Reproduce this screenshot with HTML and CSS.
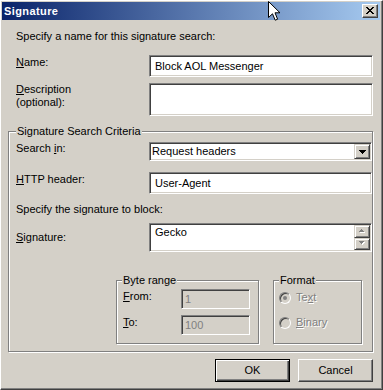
FILE: index.html
```html
<!DOCTYPE html>
<html lang="en">
<head>
  <meta charset="UTF-8">
  <meta name="viewport" content="width=device-width, initial-scale=1.0">
  <title>Signature</title>
  <link rel="stylesheet" href="styles.css">
</head>
<body>
  <div class="window">
    <div class="titlebar">
      <span class="title">Signature</span>
      <button class="close-btn" aria-label="Close">
        <svg width="8" height="7" viewBox="0 0 8 7" shape-rendering="crispEdges"><path fill="#000" d="M0 0h2v1H0zM6 0h2v1H6zM1 1h2v1H1zM5 1h2v1H5zM2 2h4v1H2zM3 3h2v1H3zM2 4h4v1H2zM1 5h2v1H1zM5 5h2v1H5zM0 6h2v1H0zM6 6h2v1H6z"/></svg>
      </button>
    </div>

    <div class="dialog">
      <p class="intro">Specify a name for this signature search:</p>

      <div class="row name-row">
        <label class="label"><u>N</u>ame:</label>
        <div class="edit">Block AOL Messenger</div>
      </div>
      <div class="row desc-row">
        <label class="label"><u>D</u>escription<br>(optional):</label>
        <div class="edit edit-tall"></div>
      </div>

      <div class="group criteria">
        <div class="group-title">Signature Search Criteria</div>

        <div class="row search-row">
          <label class="label">Search <u>i</u>n:</label>
          <div class="combo">
            <span class="combo-text">Request headers</span>
            <span class="raised combo-btn">
              <svg width="7" height="4" viewBox="0 0 7 4" shape-rendering="crispEdges"><path fill="#000" d="M0 0h7v1H0zM1 1h5v1H1zM2 2h3v1H2zM3 3h1v1H3z"/></svg>
            </span>
          </div>
        </div>

        <div class="row http-row">
          <label class="label"><u>H</u>TTP header:</label>
          <div class="edit">User-Agent</div>
        </div>

        <p class="hint">Specify the signature to block:</p>

        <div class="row sig-row">
          <label class="label"><u>S</u>ignature:</label>
          <div class="memo">
            <div class="memo-text">Gecko</div>
            <div class="scrollbar">
              <span class="raised scroll-btn">
                <svg width="8" height="5" viewBox="0 0 8 5" shape-rendering="crispEdges"><path fill="#fff" d="M4 1h1v1H4zM3 2h3v1H3zM2 3h5v1H2z"/><path fill="#808080" d="M3 0h1v1H3zM2 1h3v1H2zM1 2h5v1H1z"/></svg>
              </span>
              <span class="raised scroll-btn">
                <svg width="8" height="5" viewBox="0 0 8 5" shape-rendering="crispEdges"><path fill="#fff" d="M2 1h5v1H2zM3 2h3v1H3zM4 3h1v1H4z"/><path fill="#808080" d="M1 0h5v1H1zM2 1h3v1H2zM3 2h1v1H3z"/></svg>
              </span>
            </div>
          </div>
        </div>

        <div class="lower">
          <div class="group byte-group">
            <div class="group-title">Byte range</div>
            <div class="row small-row from-row">
              <label class="label"><u>F</u>rom:</label>
              <div class="edit small-edit">1</div>
            </div>
            <div class="row small-row to-row">
              <label class="label"><u>T</u>o:</label>
              <div class="edit small-edit">100</div>
            </div>
          </div>

          <div class="group format-group">
            <div class="group-title">Format</div>
            <div class="radio-row text-row">
              <span class="radio checked"></span>
              <span class="disabled">Te<u>x</u>t</span>
            </div>
            <div class="radio-row binary-row">
              <span class="radio"></span>
              <span class="disabled"><u>B</u>inary</span>
            </div>
          </div>
        </div>
      </div>

      <div class="buttons">
        <button class="btn btn-default">OK</button>
        <button class="btn">Cancel</button>
      </div>
    </div>

    <svg class="cursor" width="13" height="21" viewBox="0 0 13 21"><path d="M0.5 0.5V16.5L4.5 12.8L7.2 19.2L9.6 18.2L7 11.8H12Z" fill="#fff" stroke="#000" stroke-width="1" stroke-linejoin="miter"/></svg>
  </div>
</body>
</html>
```

FILE: styles.css
```css
* {
  box-sizing: border-box;
}
body {
  margin: 0;
  background: #d4d0c8;
  color: #000;
  font-family: 'Liberation Sans', Arial, sans-serif;
  font-size: 11px;
  line-height: 13px;
}
p {
  margin: 0;
}

/* window frame */
.window {
  position: relative;
  width: 383px;
  height: 390px;
  background: #d4d0c8;
  border: 1px solid;
  border-color: #fff #404040 #404040 #fff;
  box-shadow: inset -1px -1px #808080;
  padding: 1px 2px 2px 1px;
}
.titlebar {
  height: 18px;
  display: flex;
  align-items: center;
  justify-content: space-between;
  padding: 0 2px;
  background: linear-gradient(to right, #0a246a, #a6caf0);
}
.title {
  color: #fff;
  font-weight: bold;
  letter-spacing: 0.4px;
}
.close-btn {
  width: 16px;
  height: 14px;
  padding: 0 0 1px 0;
  display: flex;
  align-items: center;
  justify-content: center;
  background: #d4d0c8;
  border: 1px solid;
  border-color: #fff #404040 #404040 #fff;
  box-shadow: inset -1px -1px #808080;
}
.cursor {
  position: absolute;
  left: 267px;
  top: 0;
}

/* dialog body */
.dialog {
  padding: 10px 7px 0 6px;
}
.intro {
  margin-left: 8px;
}
.row {
  display: grid;
  grid-template-columns: 141px 1fr;
}
.label {
  padding-left: 8px;
}
.name-row {
  margin-top: 12px;
}
.name-row .label,
.http-row .label {
  padding-top: 1px;
}
.desc-row {
  margin-top: 6px;
}

/* sunken controls */
.edit, .combo, .memo {
  background: #fff;
  border: 1px solid;
  border-color: #808080 #fff #fff #808080;
  box-shadow: inset 1px 1px #404040, inset -1px -1px #d4d0c8;
}
.edit {
  height: 22px;
  padding: 0 5px;
  line-height: 20px;
  white-space: nowrap;
  overflow: hidden;
}
.edit-tall {
  height: 33px;
}
.raised {
  display: flex;
  align-items: center;
  justify-content: center;
  background: #d4d0c8;
  border: 1px solid;
  border-color: #d4d0c8 #404040 #404040 #d4d0c8;
  box-shadow: inset 1px 1px #fff, inset -1px -1px #808080;
}

/* group boxes */
.group {
  border: 1px solid #808080;
  box-shadow: inset 1px 1px #fff, 1px 1px #fff;
}
.group-title {
  width: max-content;
  margin: -7px 0 0 7px;
  padding: 0 1px;
  background: #d4d0c8;
}
.criteria {
  margin-top: 15px;
  padding-bottom: 7px;
}
.criteria > .row {
  grid-template-columns: 140px 1fr;
}
.criteria > .row > .label {
  padding-left: 7px;
}
.search-row {
  margin-top: 4px;
}
.combo {
  height: 19px;
  display: flex;
  padding: 1px;
}
.combo-text {
  flex: 1;
  padding-left: 1px;
  line-height: 15px;
}
.combo-btn {
  width: 16px;
  padding-top: 1px;
}
.http-row {
  margin-top: 11px;
}
.hint {
  margin: 9px 0 0 7px;
}
.sig-row {
  margin-top: 7px;
  align-items: center;
}
.memo {
  height: 29px;
  display: flex;
  padding: 1px;
}
.memo-text {
  flex: 1;
  padding: 1px 4px;
}
.scrollbar {
  width: 16px;
  display: flex;
  flex-direction: column;
}
.scroll-btn {
  flex: 1;
}

/* byte range / format */
.lower {
  display: flex;
  margin: 28px 0 0 107px;
}
.byte-group {
  width: 143px;
  height: 64px;
}
.format-group {
  width: 89px;
  height: 64px;
  margin-left: 14px;
}
.byte-group .group-title,
.format-group .group-title {
  margin-left: 5px;
}
.small-row {
  grid-template-columns: 64px 69px;
}
.small-row .label {
  padding: 1px 0 0 6px;
}
.from-row {
  margin-top: 2px;
}
.to-row {
  margin-top: 6px;
}
.small-edit {
  height: 20px;
  line-height: 18px;
  padding: 0 3px;
  background: #d4d0c8;
  color: #808080;
}
.radio-row {
  display: flex;
  align-items: center;
  gap: 5px;
  height: 13px;
  padding-left: 5px;
}
.text-row {
  margin-top: 4px;
}
.binary-row {
  margin-top: 12px;
}
.radio {
  width: 12px;
  height: 12px;
  display: flex;
  align-items: center;
  justify-content: center;
  border-radius: 50%;
  border: 1px solid;
  border-color: #808080 #fff #fff #808080;
  box-shadow: inset 1px 1px #404040, inset -1px -1px #d4d0c8;
  background: #d4d0c8;
}
.radio.checked::after {
  content: '';
  width: 4px;
  height: 4px;
  border-radius: 50%;
  background: #808080;
}
.disabled {
  color: #808080;
  text-shadow: 1px 1px #fff;
}

/* buttons */
.buttons {
  display: flex;
  justify-content: flex-end;
  gap: 8px;
  margin-top: 7px;
}
.btn {
  width: 75px;
  height: 23px;
  padding: 0;
  font: inherit;
  color: #000;
  background: #d4d0c8;
  border: 1px solid;
  border-color: #fff #404040 #404040 #fff;
  box-shadow: inset -1px -1px #808080;
}
.btn-default {
  border-color: #000;
  box-shadow: inset 1px 1px #fff, inset -1px -1px #404040, inset -2px -2px #808080;
}
```
